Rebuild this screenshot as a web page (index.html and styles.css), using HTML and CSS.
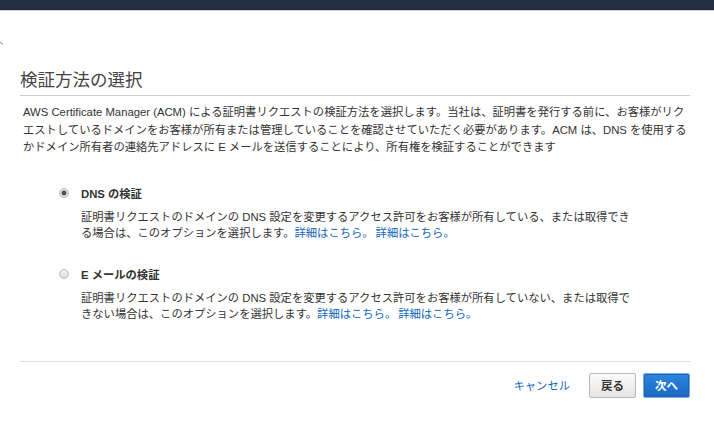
FILE: index.html
```html
<!DOCTYPE html>
<html lang="ja">
<head>
<meta charset="utf-8">
<title>検証方法の選択</title>
<link rel="stylesheet" href="styles.css">
</head>
<body>
<div class="topbar"></div>
<div class="page">
  <div class="crumb"><svg width="5" height="5" viewBox="0 0 5 5"><path d="M0 1 L3 3.5" stroke="#8a9099" stroke-width="1" fill="none"/></svg></div>
  <h1 class="title">検証方法の選択</h1>
  <p class="intro">AWS Certificate Manager (ACM) による証明書リクエストの検証方法を選択します。当社は、証明書を発行する前に、お客様がリクエストしているドメインをお客様が所有または管理していることを確認させていただく必要があります。ACM は、DNS を使用するかドメイン所有者の連絡先アドレスに E メールを送信することにより、所有権を検証することができます</p>

  <div class="options">
    <div class="option">
      <div class="option-head">
        <span class="radio checked"></span>
        <span class="label">DNS の検証</span>
      </div>
      <p class="desc">証明書リクエストのドメインの DNS 設定を変更するアクセス許可をお客様が所有している、または取得できる場合は、このオプションを選択します。<a href="#" class="more">詳細はこちら。</a><a href="#" class="more">詳細はこちら。</a></p>
    </div>
    <div class="option second">
      <div class="option-head">
        <span class="radio"></span>
        <span class="label">E メールの検証</span>
      </div>
      <p class="desc">証明書リクエストのドメインの DNS 設定を変更するアクセス許可をお客様が所有していない、または取得できない場合は、このオプションを選択します。<a href="#" class="more">詳細はこちら。</a><a href="#" class="more">詳細はこちら。</a></p>
    </div>
  </div>

  <div class="footer">
    <a href="#" class="cancel">キャンセル</a>
    <button class="btn back">戻る</button>
    <button class="btn next">次へ</button>
  </div>
</div>
</body>
</html>
```

FILE: styles.css
```css
html, body {
  margin: 0;
  padding: 0;
  background: #ffffff;
}

body {
  font-family: "Liberation Sans", "Noto Sans CJK JP", sans-serif;
  color: #333333;
  font-size: 11.3px;
}

.topbar {
  height: 10px;
  background: #232f3e;
  border-bottom: 1px solid #c9ced4;
}

.page {
  padding: 0 24px 0 20px;
}

.crumb {
  height: 58px;
  margin-left: -20px;
  padding-top: 30px;
  box-sizing: border-box;
}

.crumb svg {
  display: block;
}

.title {
  margin: 0;
  font-size: 17.5px;
  font-weight: normal;
  line-height: 22px;
  color: #444444;
  padding-bottom: 4px;
  border-bottom: 1px solid #cccccc;
}

.intro {
  margin: 0;
  padding: 8px 0 0 3px;
  line-height: 17.5px;
}

.options {
  padding-left: 39px;
  margin-top: 28px;
}

.option-head {
  display: flex;
  align-items: center;
  height: 17px;
}

.radio {
  width: 8px;
  height: 8px;
  border-radius: 50%;
  border: 1px solid #b9b9b9;
  background: linear-gradient(#f4f4f4, #dcdcdc);
  box-sizing: content-box;
  flex: none;
}

.radio.checked {
  background: radial-gradient(circle, #555555 0, #555555 2.2px, #e6e6e6 2.8px, #e6e6e6 100%);
}

.label {
  margin-left: 12px;
  font-weight: bold;
  color: #333333;
}

.desc {
  margin: 7px 0 0 22px;
  line-height: 16.5px;
  max-width: 549px;
}

.desc a {
  display: inline-block;
  color: #1166bb;
  text-decoration: none;
}

.desc .more + .more {
  margin-left: 2px;
}

.option.second {
  margin-top: 24px;
}

.footer {
  margin-top: 38px;
  border-top: 1px solid #dddddd;
  padding-top: 11px;
  display: flex;
  justify-content: flex-end;
  align-items: center;
}

.cancel {
  color: #1166bb;
  text-decoration: none;
  font-size: 11.3px;
  margin-right: 19px;
}

.btn {
  font-family: "Liberation Sans", "Noto Sans CJK JP", sans-serif;
  font-size: 11.5px;
  font-weight: bold;
  height: 25px;
  padding: 0 11px;
  border-radius: 2px;
  cursor: pointer;
}

.back {
  color: #333333;
  border: 1px solid #b8b8b8;
  background: linear-gradient(#fafafa, #e6e6e6);
}

.next {
  margin-left: 7px;
  color: #ffffff;
  border: 1px solid #75aee8;
  background: linear-gradient(#2b87dd, #1b67c2);
  box-shadow: inset 0 0 0 1px #1f62b5;
}
```
